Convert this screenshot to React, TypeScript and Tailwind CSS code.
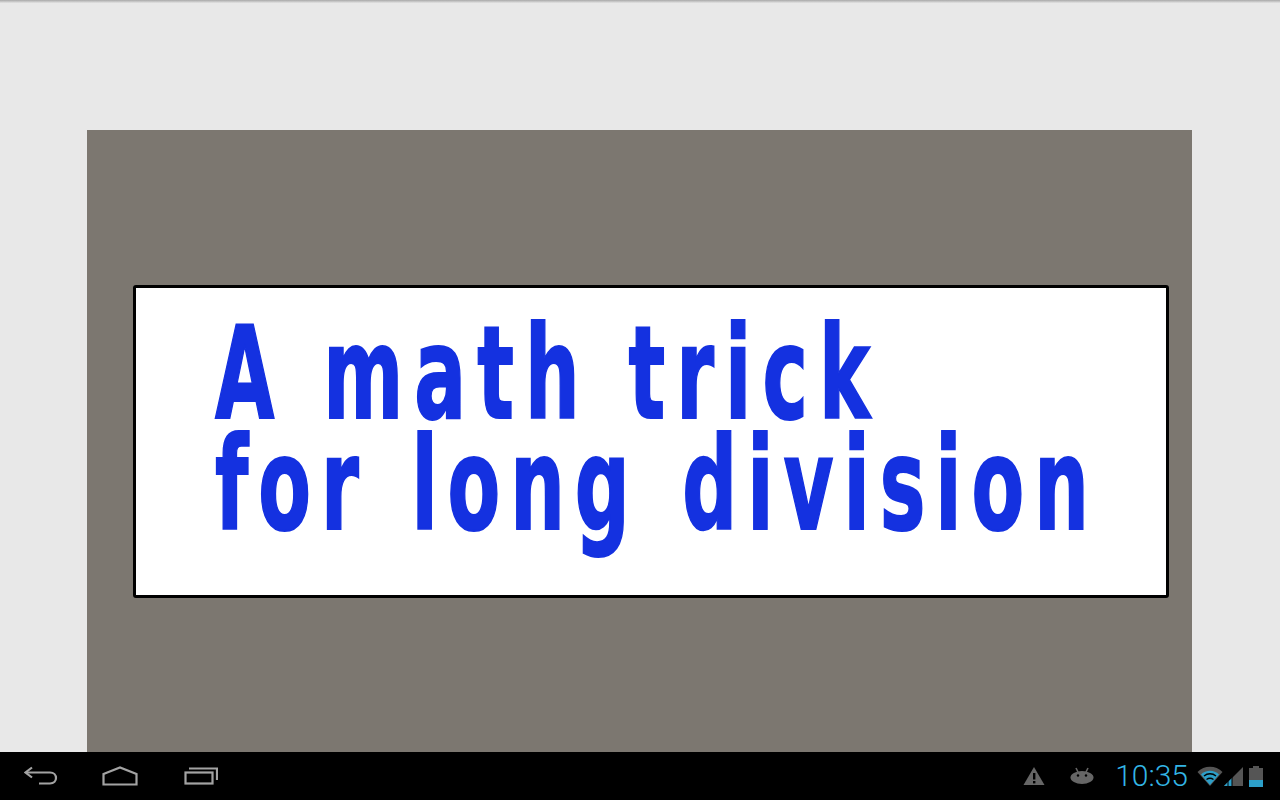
function NavIcons() {
  return (
    <div className="flex items-center pl-[24px]">
      <svg width="34" height="20" viewBox="0 0 34 20" fill="none" stroke="#a3a3a3" strokeWidth="2.2" className="mr-[44px]">
        <path d="M8 1.5 L1.5 6.5 L8 11.5" />
        <path d="M2 6.5 H26 C34 6.5 34 17.5 26 17.5 H15" />
      </svg>
      <svg width="36" height="20" viewBox="0 0 36 20" fill="none" stroke="#a3a3a3" strokeWidth="2.2" className="mr-[46px]">
        <path d="M1.5 8 L18 1.5 L34.5 8 V18.5 H1.5 Z" />
      </svg>
      <svg width="34" height="20" viewBox="0 0 34 20" fill="none" stroke="#a3a3a3" strokeWidth="2.2">
        <rect x="1.5" y="6.5" width="27" height="11" />
        <path d="M5 2.5 H33 V14" />
      </svg>
    </div>
  )
}

function StatusIcons() {
  return (
    <div className="flex items-center pr-[17px]">
      <svg width="22" height="20" viewBox="0 0 22 20" className="mr-[25px]">
        <path d="M11 1 L21.5 19 H0.5 Z" fill="#666" />
        <rect x="10" y="7" width="2.4" height="6.5" fill="#000" />
        <rect x="10" y="15" width="2.4" height="2.4" fill="#000" />
      </svg>
      <svg width="24" height="18" viewBox="0 0 24 18" className="mr-[21px]">
        <ellipse cx="12" cy="10.5" rx="11.5" ry="6.5" fill="#666" />
        <path d="M6 1 L8 5 M18 1 L16 5" stroke="#666" strokeWidth="1.6" />
        <circle cx="8" cy="8.5" r="1.2" fill="#000" />
        <circle cx="16" cy="8.5" r="1.2" fill="#000" />
      </svg>
      <span className="mr-[9px] font-['Roboto',sans-serif] text-[30px] leading-none font-light text-[#33b5e5]">10:35</span>
      <svg width="26" height="20" viewBox="0 0 26 20" className="mr-[1px]">
        <path d="M0.5 6 C7 -1 19 -1 25.5 6 L13 20 Z" fill="#555" />
        <path d="M4 8.5 C9 3.5 17 3.5 22 8.5 L13 19 Z" fill="#2c9fc9" />
        <path d="M7 10 C10.5 7 15.5 7 19 10" stroke="#000" strokeWidth="1.4" fill="none" />
        <path d="M9.5 13.5 C11.5 12 14.5 12 16.5 13.5" stroke="#000" strokeWidth="1.4" fill="none" />
      </svg>
      <svg width="19" height="20" viewBox="0 0 19 20" className="mr-[6px]">
        <path d="M0 20 L19 1 V20 Z" fill="#555" />
        <path d="M0 20 L8 12 V20 Z" fill="#2c9fc9" />
        <path d="M4 20 V15 M8 20 V11" stroke="#000" strokeWidth="1" />
      </svg>
      <svg width="14" height="21" viewBox="0 0 14 21">
        <rect x="4" y="0" width="6" height="2" fill="#555" />
        <rect x="0" y="2" width="14" height="19" fill="#555" />
        <rect x="0" y="14" width="14" height="7" fill="#2c9fc9" />
      </svg>
    </div>
  )
}

export default function App() {
  return (
    <div className="flex h-[800px] w-[1280px] flex-col overflow-hidden bg-[#e8e8e8]">
      <div className="h-[3px] bg-gradient-to-b from-[#a8a8a8] to-[#e4e4e4]" />
      <div className="flex min-h-0 flex-1 pl-[87px] pt-[127px]">
        <div className="flex h-[622px] w-[1105px] flex-col bg-[#7c7770] pl-[46px] pr-[23px] pt-[155px]">
          <div className="h-[313px] rounded-[3px] border-[3px] border-black bg-white pl-[79px] pt-[30px]">
            <div className="origin-top-left scale-x-[0.6] font-['DejaVu_Sans',sans-serif] text-[128px] leading-[111px] font-bold [-webkit-text-stroke:2px_#1431e0] whitespace-nowrap text-[#1431e0]">
              <div className="tracking-[18.4px]">A math trick</div>
              <div className="tracking-[16.5px] [word-spacing:10px]">for long division</div>
            </div>
          </div>
        </div>
      </div>
      <div className="flex h-[48px] shrink-0 items-center justify-between bg-black">
        <NavIcons />
        <StatusIcons />
      </div>
    </div>
  )
}
